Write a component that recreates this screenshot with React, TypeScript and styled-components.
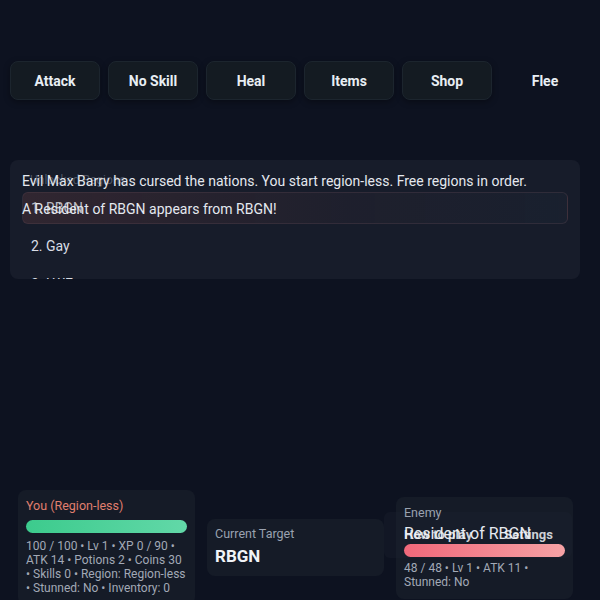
import styled, { createGlobalStyle } from 'styled-components';

const GlobalStyle = createGlobalStyle`
  body {
    margin: 0;
    background: #0d1220;
    font-family: Roboto, "Liberation Sans", sans-serif;
    color: #e6ebf2;
  }
`;

const actions = ['Attack', 'No Skill', 'Heal', 'Items', 'Shop', 'Flee'];

export default function App() {
  return (
    <>
      <GlobalStyle />
      <Screen>
        <ActionBar>
          {actions.map((a) => (
            <ActionButton key={a} $ghost={a === 'Flee'}>
              {a}
            </ActionButton>
          ))}
        </ActionBar>

        <LogPanel>
          <RegionList>
            <RegionLabel>Unlocked Regions</RegionLabel>
            <RegionItem $active>1. RBGN</RegionItem>
            <RegionItem>2. Gay</RegionItem>
            <RegionItem>3. LWE</RegionItem>
          </RegionList>

          <LogLine>Evil Max Barry has cursed the nations. You start region-less. Free regions in order.</LogLine>
          <LogLine>A Resident of RBGN appears from RBGN!</LogLine>
        </LogPanel>

        <StatusRow>
          <StatCard>
            <PlayerName>You (Region-less)</PlayerName>
            <HpBar $color="linear-gradient(90deg, #3ccb8d, #62d8a8)" />
            <StatText>
              100 / 100 • Lv 1 • XP 0 / 90 • ATK 14 • Potions 2 • Coins 30 • Skills 0 • Region: Region-less •
              Stunned: No • Inventory: 0
            </StatText>
          </StatCard>

          <TargetCard>
            <Label>Current Target</Label>
            <TargetName>RBGN</TargetName>
          </TargetCard>

          <EnemyCard>
            <MenuRow>
              <MenuButton>How to play</MenuButton>
              <MenuButton>Settings</MenuButton>
            </MenuRow>

            <Label>Enemy</Label>
            <EnemyName>Resident of RBGN</EnemyName>
            <HpBar $color="linear-gradient(90deg, #f0687a, #f6a2a5)" />
            <StatText>48 / 48 • Lv 1 • ATK 11 • Stunned: No</StatText>
          </EnemyCard>
        </StatusRow>
      </Screen>
    </>
  );
}

const Screen = styled.main`
  display: flex;
  flex-direction: column;
  padding: 61px 10px 0;
`;

const ActionBar = styled.nav`
  display: flex;
  gap: 8px;
`;

const ActionButton = styled.button<{ $ghost?: boolean }>`
  width: 90px;
  height: 39px;
  border-radius: 8px;
  border: 1px solid ${({ $ghost }) => ($ghost ? 'transparent' : '#1c252e')};
  background: ${({ $ghost }) => ($ghost ? 'transparent' : '#141b22')};
  box-shadow: ${({ $ghost }) => ($ghost ? 'none' : '0 2px 6px rgba(0, 0, 0, 0.35)')};
  color: #e8eef4;
  font-family: Roboto, sans-serif;
  font-size: 14px;
  font-weight: 700;
`;

const LogPanel = styled.section`
  position: relative;
  margin-top: 60px;
  width: 570px;
  height: 119px;
  box-sizing: border-box;
  padding: 7px 12px;
  border-radius: 8px;
  background: #171c2a;
  overflow: hidden;
`;

const LogLine = styled.p`
  position: relative;
  margin: 0;
  font-size: 14px;
  line-height: 28px;
  color: #e4e8ef;
`;

const RegionList = styled.div`
  position: absolute;
  left: 12px;
  right: 12px;
  top: 14px;
  display: flex;
  flex-direction: column;
  gap: 6px;
`;

const RegionLabel = styled.div`
  padding-left: 8px;
  font-size: 12px;
  color: rgba(150, 158, 175, 0.45);
  height: 12px;
  line-height: 12px;
`;

const RegionItem = styled.div<{ $active?: boolean }>`
  height: 32px;
  box-sizing: border-box;
  display: flex;
  align-items: center;
  padding: 0 8px;
  border-radius: 6px;
  font-size: 14px;
  color: ${({ $active }) => ($active ? 'rgba(225, 228, 235, 0.8)' : '#d9dde5')};
  background: ${({ $active }) =>
    $active ? 'linear-gradient(90deg, rgba(75, 48, 55, 0.5), rgba(42, 38, 50, 0.4) 60%, rgba(30, 40, 55, 0.35))' : 'transparent'};
  border: 1px solid ${({ $active }) => ($active ? 'rgba(90, 70, 80, 0.35)' : 'transparent')};
`;

const StatusRow = styled.section`
  display: flex;
  align-items: center;
  gap: 12px;
  margin-top: 211px;
  padding-left: 8px;
`;

const Card = styled.div`
  width: 177px;
  box-sizing: border-box;
  border-radius: 8px;
  background: #151b27;
  padding: 8px;
`;

const StatCard = styled(Card)`
  display: flex;
  flex-direction: column;
  gap: 6px;
  padding-bottom: 10px;
`;

const PlayerName = styled.div`
  font-size: 12.5px;
  color: #e07f6e;
  line-height: 16px;
`;

const HpBar = styled.div<{ $color: string }>`
  position: relative;
  height: 13px;
  border-radius: 7px;
  background: ${({ $color }) => $color};
`;

const StatText = styled.div`
  position: relative;
  font-size: 12px;
  line-height: 14px;
  color: #a2a9b6;
`;

const TargetCard = styled(Card)`
  height: 57px;
  display: flex;
  flex-direction: column;
  justify-content: center;
  gap: 4px;
  padding: 0 8px 4px;
`;

const Label = styled.div`
  position: relative;
  font-size: 12.5px;
  color: #9aa2b0;
  line-height: 16px;
`;

const TargetName = styled.div`
  font-size: 17px;
  font-weight: 700;
  color: #f0f3f7;
`;

const EnemyCard = styled(Card)`
  position: relative;
  display: flex;
  flex-direction: column;
  gap: 4px;
  padding-bottom: 10px;
`;

const EnemyName = styled.div`
  position: relative;
  font-size: 16px;
  color: #e6eaf0;
  line-height: 18px;
  margin-bottom: -3px;
`;

const MenuRow = styled.div`
  position: absolute;
  left: -12px;
  top: 15px;
  width: 188px;
  height: 46px;
  display: flex;
  align-items: center;
  gap: 32px;
  padding: 0 0 0 20px;
  box-sizing: border-box;
  border-radius: 6px;
  background: rgba(30, 38, 50, 0.3);
`;

const MenuButton = styled.span`
  position: relative;
  z-index: 1;
  font-size: 13px;
  font-weight: 700;
  color: rgba(240, 242, 246, 0.85);
`;
